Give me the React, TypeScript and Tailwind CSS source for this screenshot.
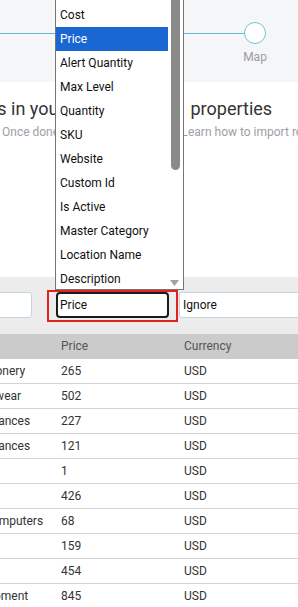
import React from "react";

const items = [
  "Name",
  "Cost",
  "Price",
  "Alert Quantity",
  "Max Level",
  "Quantity",
  "SKU",
  "Website",
  "Custom Id",
  "Is Active",
  "Master Category",
  "Location Name",
  "Description",
];

const rows: [string, string][] = [
  ["Stationery", "265"],
  ["Footwear", "502"],
  ["Appliances", "227"],
  ["Appliances", "121"],
  ["Toys", "1"],
  ["Food", "426"],
  ["IT Computers", "68"],
  ["Toys", "159"],
  ["Food", "454"],
  ["Equipment", "845"],
];

export default function App() {
  return (
    <div className="relative w-[298px] h-[607px] overflow-hidden bg-white font-['Roboto',sans-serif]">
      {/* stepper */}
      <div className="flex items-start h-[82px] bg-[#f5f6f8] pt-[22px]">
        <div className="flex-1 h-px mt-[11px] bg-[#6ab4d4]" />
        <div className="flex flex-col items-center w-[22px] shrink-0">
          <div className="w-[22px] h-[22px] rounded-full border-[1.5px] border-[#74c0dc] bg-white" />
          <div className="mt-[5px] text-[12px] leading-[16px] text-[#9b9ba8] whitespace-nowrap">Map</div>
        </div>
        <div className="w-[32px] shrink-0" />
      </div>

      {/* heading */}
      <div className="h-[195px] pt-[15px] overflow-hidden">
        <h2 className="flex ml-[-102.5px] text-[18px] leading-[24px] text-[#333333] whitespace-nowrap font-normal">
          <span className="w-[293px] shrink-0 overflow-hidden">Map columns in your file to the item</span>
          <span>properties</span>
        </h2>
        <p className="flex mt-[3px] ml-[2px] text-[12px] leading-[16px] text-[#9e9ea6] whitespace-nowrap">
          <span className="w-[179.5px] shrink-0 overflow-hidden">Once done, click Next to continue.</span>
          <span>Learn how to import records</span>
        </p>
      </div>

      {/* mapping inputs band */}
      <div className="flex h-[57px] pt-[15px] bg-[#ececec] text-[12px]">
        <div className="ml-[-20px] w-[52px] h-[26px] shrink-0 rounded-[3px] border border-[#c3d5dd] bg-white" />
        <div className="ml-[24px] w-[113px] h-[26px] shrink-0 rounded-[4px] border-2 border-[#1b1b1b] bg-white pl-[2px] leading-[22px] text-[#111]">
          Price
        </div>
        <div className="ml-[10px] w-[140px] h-[26px] shrink-0 rounded-[3px] border border-[#c3d5dd] bg-white pl-[3px] leading-[24px] text-[#111]">
          Ignore
        </div>
      </div>

      {/* table */}
      <div className="ml-[-34px] w-[400px] text-[12px]">
        <div className="grid grid-cols-[90px_123px_187px] h-[25px] bg-[#cbcbcb] text-[#555555] leading-[25px]">
          <div className="pl-[5px] whitespace-nowrap">Type</div>
          <div className="pl-[5px]">Price</div>
          <div className="pl-[5px]">Currency</div>
        </div>
        {rows.map(([c, p], i) => (
          <div
            key={i}
            className="grid grid-cols-[90px_123px_187px] h-[25px] border-b border-[#d3d3d3] text-[#333333] leading-[24px]"
          >
            <div className="pl-[5px] whitespace-nowrap">{c}</div>
            <div className="pl-[5px]">{p}</div>
            <div className="pl-[5px]">USD</div>
          </div>
        ))}
      </div>

      {/* red highlight */}
      <div className="absolute left-[47px] top-[290px] w-[131px] h-[32px] border-2 border-[#e3211f] pointer-events-none" />

      {/* open listbox */}
      <div className="absolute left-[55px] top-[-22px] w-[129px] h-[312px] flex overflow-hidden border border-[#767676] bg-white">
        <div className="w-[112px] shrink-0 flex flex-col">
          {items.map((t) => (
            <div
              key={t}
              className={
                t === "Price"
                  ? "h-[24px] shrink-0 pl-[4px] leading-[24px] text-[12px] whitespace-nowrap bg-[#1967d2] text-white"
                  : "h-[24px] shrink-0 pl-[4px] leading-[24px] text-[12px] whitespace-nowrap text-[#111111]"
              }
            >
              {t}
            </div>
          ))}
        </div>
        <div className="w-[15px] shrink-0 flex flex-col bg-white">
          <div className="ml-[3px] w-[9px] h-[191px] rounded-b-full bg-[#8a8a8a]" />
          <div className="flex-1" />
          <div className="ml-[2px] mb-[3px] w-[9px] h-[6px]">
            <svg width="9" height="6" viewBox="0 0 9 6">
              <polygon points="0,0 9,0 4.5,6" fill="#a3a3a3" />
            </svg>
          </div>
        </div>
      </div>
    </div>
  );
}
